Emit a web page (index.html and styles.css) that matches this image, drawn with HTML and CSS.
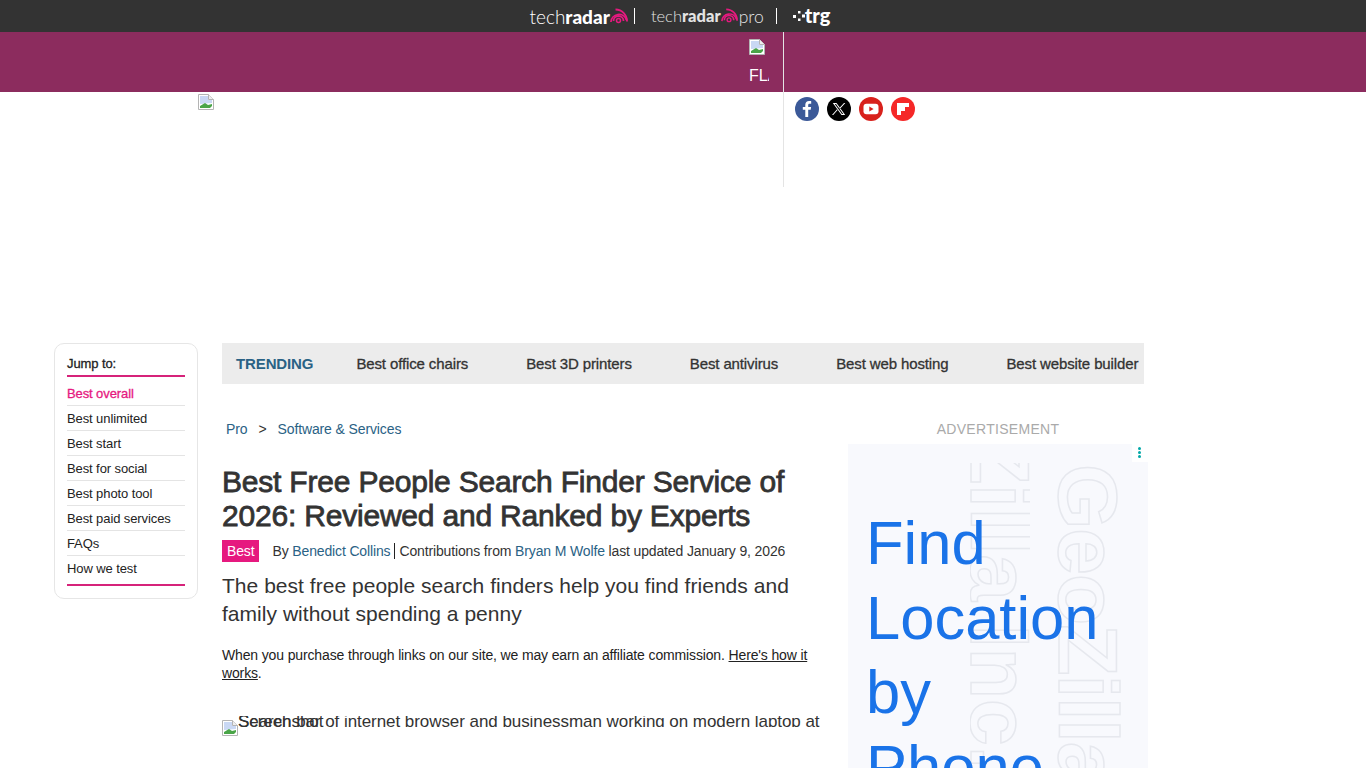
FILE: index.html
```html
<!DOCTYPE html>
<html lang="en">
<head>
    <meta charset="UTF-8">
    <meta name="viewport" content="width=device-width, initial-scale=1.0">
    <title>Best Free People Search Finder Service of 2026</title>
    <link rel="stylesheet" href="styles.css">
</head>
<body>
    <svg class="sprites" width="0" height="0" aria-hidden="true">
        <symbol id="broken" viewBox="0 0 16 16">
            <path d="M.5.5h10l5 5v10H.5z" fill="#fff" stroke="#b4b4b4"/>
            <path d="M10.500.5v5h5" fill="#eee" stroke="#b4b4b4"/>
            <path d="M2 2h8v4h4v3L2 10z" fill="#c9d8f4"/>
            <path d="M2 14v-2l5-3 3 2 4-1v4z" fill="#4aa548"/>
            <path d="M11 15l4-4v4z" fill="#fff"/>
        </symbol>
        <symbol id="waves" viewBox="0 0 18 18">
            <circle cx="8.500" cy="13.500" r="2" fill="none" stroke="#e6197f" stroke-width="1.500"/>
            <path d="M3.500 14a5 5 0 0 1 10 0" fill="none" stroke="#e6197f" stroke-width="1.800"/>
            <path d="M.9 15a8 8 0 0 1 15.600-2" fill="none" stroke="#e6197f" stroke-width="1.800"/>
            <path d="M5.500 2.500A11.500 11.500 0 0 1 17 14.500" fill="none" stroke="#e6197f" stroke-width="1.800"/>
        </symbol>
    </svg>

    <div class="network-bar">
        <a class="brand">tech<b>radar</b><svg class="brand-waves"><use href="#waves"/></svg></a>
        <span class="brand-sep"></span>
        <a class="brand brand-pro">tech<b>radar</b><svg class="brand-waves brand-waves-sm"><use href="#waves"/></svg><span class="pro">pro</span></a>
        <span class="brand-sep brand-sep-wide"></span>
        <a class="brand brand-trg">
            <svg class="trg-dots" viewBox="0 0 12 10"><path d="M0 4h3v3H0zM5 0h2.500v2.500H5zM5 7.500h2.500V10H5zM9 3.500h3v3H9z" fill="#fff"/></svg>
            <b>trg</b>
        </a>
    </div>

    <div class="masthead">
        <div class="mast-left">
            <div class="band">
                <div class="band-logo">
                    <svg class="broken"><use href="#broken"/></svg>
                    <span class="band-alt">FLAGSHIP</span>
                </div>
            </div>
            <div class="mast-logo"><svg class="broken"><use href="#broken"/></svg></div>
        </div>
        <div class="mast-right">
            <div class="band"></div>
            <div class="socials">
                <svg class="social" viewBox="0 0 24 24"><circle cx="12" cy="12" r="12" fill="#3b5998"/><path d="M13.200 20v-7.200h2.500l.4-2.900h-2.900V8.200c0-.8.300-1.400 1.500-1.400h1.500V4.200c-.3 0-1.200-.1-2.200-.1-2.200 0-3.700 1.300-3.700 3.800v2H7.800v2.900h2.500V20z" fill="#fff"/></svg>
                <svg class="social" viewBox="0 0 24 24"><circle cx="12" cy="12" r="12" fill="#000"/><path d="M5.800 6h3.700l8.700 12h-3.700zM7.700 7l7.300 10h1.300L9 7zM17 6l-4.600 5 .6.800L18.300 6zM6.200 18l4.900-5.400-.6-.8L5 18z" fill="#fff"/></svg>
                <svg class="social" viewBox="0 0 24 24"><circle cx="12" cy="12" r="12" fill="#d8211c"/><rect x="4.500" y="6.800" width="15" height="10.400" rx="3" fill="#fff"/><path d="M10.300 9.500v5l4.300-2.500z" fill="#d8211c"/></svg>
                <svg class="social" viewBox="0 0 24 24"><circle cx="12" cy="12" r="12" fill="#f52828"/><path d="M6 6h12v4h-4v4h-4v4H6z" fill="#fff"/></svg>
            </div>
        </div>
    </div>

    <div class="page">
        <aside class="jump">
            <div class="jump-title">Jump to:</div>
            <ul class="jump-list">
                <li class="active">Best overall</li>
                <li>Best unlimited</li>
                <li>Best start</li>
                <li>Best for social</li>
                <li>Best photo tool</li>
                <li>Best paid services</li>
                <li>FAQs</li>
                <li>How we test</li>
            </ul>
        </aside>

        <div class="content">
            <nav class="trending">
                <span class="trending-label">TRENDING</span>
                <a>Best office chairs</a>
                <a>Best 3D printers</a>
                <a>Best antivirus</a>
                <a>Best web hosting</a>
                <a>Best website builder</a>
            </nav>

            <div class="columns">
                <main class="article">
                    <div class="crumbs"><a>Pro</a><span>&gt;</span><a>Software &amp; Services</a></div>
                    <h1>Best Free People Search Finder Service of 2026: Reviewed and Ranked by Experts</h1>
                    <div class="byline">
                        <span class="badge">Best</span>
                        <span class="by">By <a>Benedict Collins</a></span>
                        <span class="contrib">Contributions from <a>Bryan M Wolfe</a> last updated January 9, 2026</span>
                    </div>
                    <p class="strap">The best free people search finders help you find friends and family without spending a penny</p>
                    <p class="affiliate">When you purchase through links on our site, we may earn an affiliate commission. <u>Here's how it works</u>.</p>
                    <div class="hero-img">
                        <svg class="broken"><use href="#broken"/></svg>
                        <div class="hero-clip">
                            <span class="hero-alt">Search bar of internet browser and businessman working on modern laptop at</span>
                            <span class="hero-alt">Screenshot</span>
                        </div>
                    </div>
                </main>

                <aside class="ad-col">
                    <div class="ad-label">ADVERTISEMENT</div>
                    <div class="ad">
                        <span class="ghost ghost-a">Zilla Inc.</span>
                        <span class="ghost ghost-b">GeoZilla</span>
                        <div class="ad-menu"><i></i><i></i><i></i></div>
                        <div class="ad-text">Find Location by Phone</div>
                    </div>
                </aside>
            </div>
        </div>
    </div>
</body>
</html>
```

FILE: styles.css
```css
html, body {
    height: 768px;
    overflow: hidden;
}
body {
    font-family: "Liberation Sans", Arial, sans-serif;
    margin: 0;
    padding: 0;
    background: #fff;
    color: #333;
}
a {
    color: #2a6285;
}
.sprites {
    position: absolute;
}
.broken {
    display: block;
    width: 16px;
    height: 16px;
    flex: none;
}

/* network strip */
.network-bar {
    height: 32px;
    background: #333;
    display: flex;
    align-items: center;
    justify-content: center;
    padding-right: 6px;
    box-sizing: border-box;
    color: #fff;
}
.brand {
    display: flex;
    align-items: center;
    color: #fff;
    font-family: Lato, sans-serif;
    font-size: 19px;
    font-weight: 300;
}
.brand b {
    font-weight: 900;
}
.brand-waves {
    width: 18px;
    height: 18px;
    margin-top: -1px;
}
.brand-waves-sm {
    width: 17px;
    height: 17px;
}
.brand-sep {
    width: 1px;
    height: 16px;
    background: #fff;
    margin: 0 16px 0 6px;
}
.brand-sep-wide {
    margin-left: 12px;
}
.brand-pro {
    font-size: 16.500px;
    color: #e4e4e4;
}
.brand-pro .pro {
    margin-left: 1px;
    font-weight: 300;
    font-size: 17.500px;
}
.brand-trg b {
    font-size: 20px;
    line-height: 1;
    margin-top: -3px;
}
.trg-dots {
    width: 12px;
    height: 10px;
}

/* masthead */
.masthead {
    display: flex;
    height: 155px;
}
.mast-left {
    width: 783px;
    border-right: 1px solid #e4e4e4;
}
.mast-right {
    flex: 1;
}
.band {
    height: 60px;
    background: #8c2c5e;
}
.band-logo {
    width: 20px;
    margin-left: 749px;
    padding-top: 7px;
    overflow: hidden;
    color: #fff;
    font-size: 16px;
}
.band-alt {
    display: block;
    white-space: nowrap;
    margin-top: 12px;
}
.mast-logo {
    padding: 2px 0 0 198px;
}
.socials {
    display: flex;
    gap: 8px;
    padding: 5px 0 0 11px;
}
.social {
    width: 24px;
    height: 24px;
}

/* page body */
.page {
    display: flex;
    align-items: flex-start;
    gap: 24px;
    margin: 156px 0 0 54px;
}
.jump {
    width: 144px;
    height: 256px;
    box-sizing: border-box;
    border: 1px solid #e6e6e6;
    border-radius: 10px;
    padding: 11px 12px 0;
}
.jump-title {
    font-size: 13px;
    letter-spacing: -.1px;
    line-height: 18px;
    padding-bottom: 2px;
    border-bottom: 2px solid #d6237a;
    -webkit-text-stroke: .3px;
    color: #222;
}
.jump-list {
    list-style: none;
    margin: 4px 0 0;
    padding: 0;
    border-bottom: 2px solid #d6237a;
}
.jump-list li {
    font-size: 13px;
    height: 24px;
    line-height: 26px;
    letter-spacing: -.1px;
    color: #222;
    border-bottom: 1px solid #e4e4e4;
}
.jump-list li:last-child {
    border-bottom: 0;
    padding-bottom: 4px;
}
.jump-list .active {
    color: #e6197f;
    -webkit-text-stroke: .3px;
}
.content {
    width: 922px;
}
.trending {
    display: flex;
    align-items: center;
    height: 41px;
    background: #ececec;
    padding-left: 14px;
    overflow: hidden;
    white-space: nowrap;
    font-size: 15px;
    letter-spacing: -.12px;
    -webkit-text-stroke: .3px;
}
.trending a {
    color: #333;
    margin-right: 58px;
    flex: none;
}
.trending-label {
    font-size: 15px;
    font-weight: bold;
    -webkit-text-stroke: 0;
    color: #2a6285;
    margin-right: 43px;
}
.columns {
    display: flex;
    align-items: flex-start;
}
.article {
    width: 598px;
    flex: none;
}
.crumbs {
    display: flex;
    gap: 11px;
    font-size: 14px;
    letter-spacing: -.12px;
    line-height: 18px;
    padding: 36px 0 0 4px;
}
h1 {
    margin: 27px 0 0;
    font-size: 30px;
    font-weight: normal;
    letter-spacing: -.2px;
    -webkit-text-stroke: .8px;
    line-height: 34px;
    color: #333;
}
.byline {
    display: flex;
    align-items: center;
    font-size: 14px;
    letter-spacing: -.14px;
    margin-top: 7px;
    height: 22px;
}
.badge {
    background: #e6197f;
    color: #fff;
    padding: 0 5px;
    line-height: 22px;
    margin-right: 13px;
}
.by {
    padding-right: 4px;
    border-right: 1px solid #222;
    line-height: 16px;
    margin-right: 4px;
}
.strap {
    margin: 10px 0 0;
    font-size: 21px;
    letter-spacing: .03px;
    line-height: 28px;
}
.affiliate {
    margin: 18px 0 0;
    font-size: 14px;
    letter-spacing: -.14px;
    line-height: 18px;
    color: #222;
}
.hero-img {
    display: flex;
    height: 20px;
    margin-top: 34px;
    align-items: flex-end;
    position: relative;
}
.hero-clip {
    position: absolute;
    left: 16px;
    top: 0;
    width: 582px;
    height: 11px;
    overflow: hidden;
}
.hero-alt {
    position: absolute;
    left: 0;
    top: -3px;
    white-space: nowrap;
    font-size: 17px;
    letter-spacing: -.06px;
    line-height: 17px;
}
.ad-col {
    margin-left: 28px;
    width: 300px;
    flex: none;
}
.ad-label {
    text-align: center;
    font-size: 14px;
    letter-spacing: .3px;
    color: #aaa;
    line-height: 18px;
    padding-top: 36px;
    margin-bottom: 6px;
}
.ad {
    position: relative;
    height: 324px;
    background: #f8f9fd;
    overflow: hidden;
}
.ad-text {
    position: relative;
    padding: 62px 40px 0 18px;
    font-size: 61.500px;
    line-height: 74.500px;
    color: #1a73e8;
}
.ad-menu {
    position: absolute;
    top: 0;
    right: 0;
    width: 16px;
    height: 18px;
    background: #fff;
    display: flex;
    flex-direction: column;
    align-items: center;
    gap: 1px;
    padding: 3px 1px 0 0;
    box-sizing: border-box;
}
.ad-menu i {
    width: 3px;
    height: 3px;
    border-radius: 50%;
    background: #00a8a8;
}
.ghost {
    position: absolute;
    writing-mode: vertical-rl;
    white-space: nowrap;
    font-weight: bold;
    font-size: 84px;
    line-height: 60px;
    color: transparent;
    -webkit-text-stroke: 1.500px #e6e8ee;
}
.ghost-a {
    left: 122px;
    top: -11px;
    clip-path: inset(30px 0 0 0);
}
.ghost-b {
    left: 210px;
    top: 20px;
    letter-spacing: -1px;
}
```
